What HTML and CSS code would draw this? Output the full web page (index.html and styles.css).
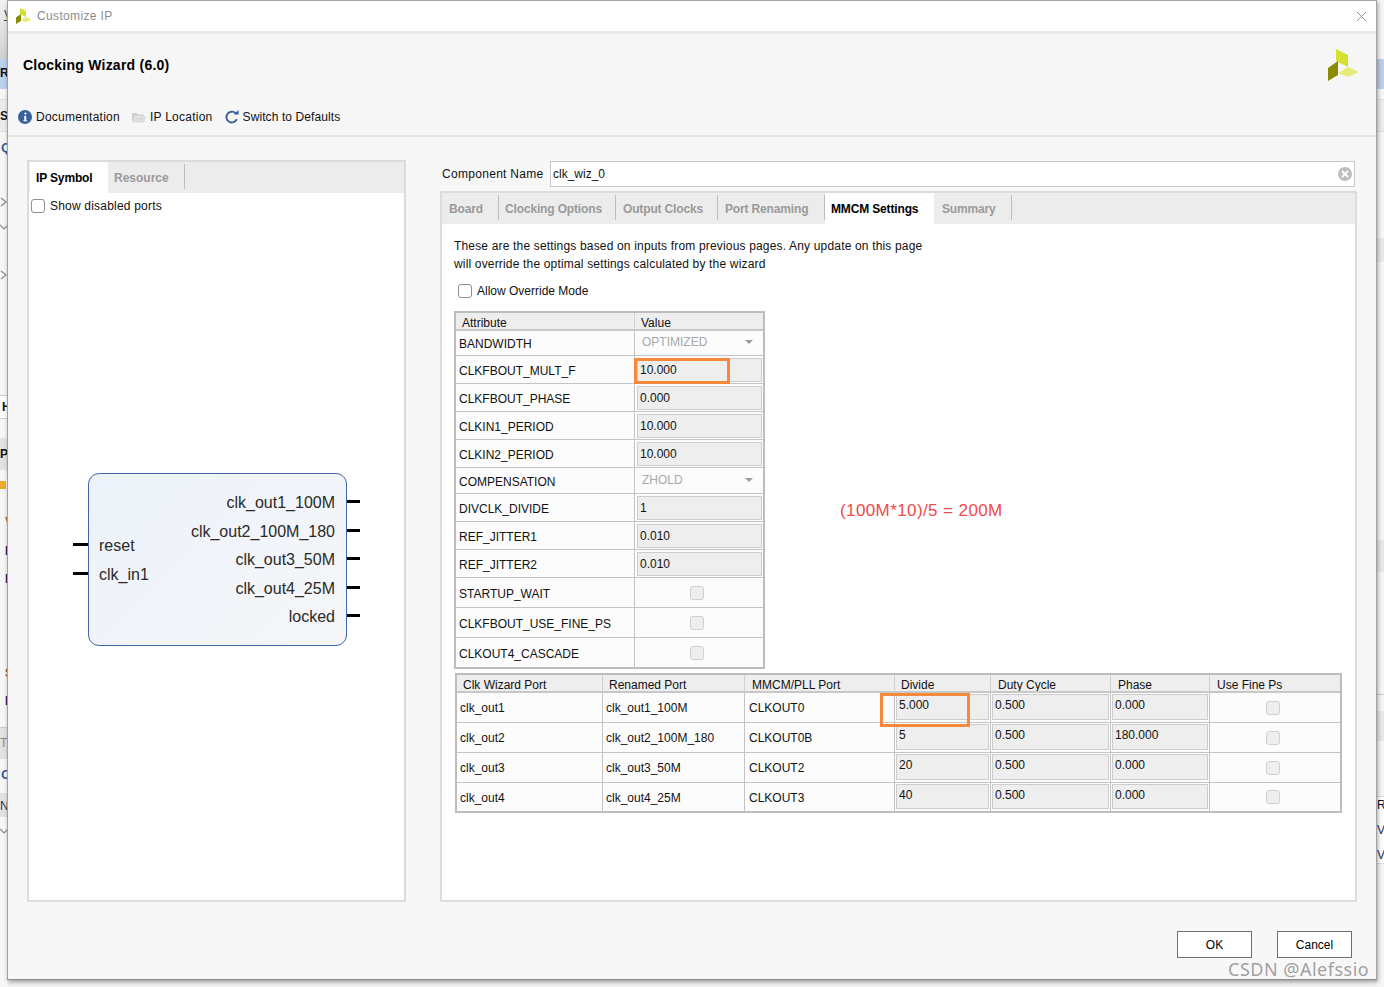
FILE: index.html
```html
<!DOCTYPE html>
<html lang="en">
<head>
<meta charset="utf-8">
<title>Customize IP</title>
<link rel="stylesheet" href="styles.css">
</head>
<body>
<div class="screen">
  <div class="bg-strip bg-left">
    <span class="bg-band bg-top"></span>
    <span class="bg-band bg-blue"></span>
    <span class="bg-band bg-grey1"></span>
    <span class="bg-band bg-grey2"></span>
    <span class="bg-band bg-grey3"></span>
    <span class="bg-band bg-grey4"></span>
    <span class="bg-band bg-grey5"></span>
    <span class="bg-t t-v">V</span><span class="bg-t t-r">R</span><span class="bg-t t-s">S</span><span class="bg-t t-q">Q</span>
    <svg class="chev c1" viewBox="0 0 8 10"><path d="M1 1l5 4-5 4"/></svg>
    <svg class="chev c2" viewBox="0 0 8 10"><path d="M0 3l4 4 4-4"/></svg>
    <svg class="chev c3" viewBox="0 0 8 10"><path d="M1 1l5 4-5 4"/></svg>
    <svg class="chev c4" viewBox="0 0 8 10"><path d="M0 3l4 4 4-4"/></svg>
    <span class="bg-t t-h">H</span><span class="bg-t t-p">P</span>
    <span class="bg-orange"></span>
    <span class="bg-t t-link t-v2">V</span><span class="bg-t t-link t-i">I</span><span class="bg-t t-link t-d">D</span>
    <span class="bg-t t-link t-s2">S</span><span class="bg-t t-link t-l">L</span>
    <span class="bg-t t-to">T</span><span class="bg-t t-q2">C</span><span class="bg-t t-n">N</span>
  </div>
  <div class="bg-strip bg-right">
    <span class="bg-band rb-blue"></span>
    <span class="bg-band rb-1"></span>
    <span class="bg-band rb-2"></span>
    <span class="bg-band rb-3"></span>
    <span class="bg-band rb-4"></span>
    <span class="bg-band rb-5"></span>
    <span class="bg-t rt-r">R</span><span class="bg-t rt-v1">Vi</span><span class="bg-t rt-v2">Vi</span>
  </div>

  <div class="dialog">
    <header class="titlebar">
      <svg class="logo-small" viewBox="0 0 32 32"><polygon class="lg-a" points="8,0 20,6 20,18 8,12"/><polygon class="lg-b" points="10,12 10,26 0,32 0,19"/><polygon class="lg-c" points="10,24 20,18 31,23 20,28"/></svg>
      <span class="title-text">Customize IP</span>
      <svg class="close" viewBox="0 0 12 12"><path d="M1 1 11 11M11 1 1 11"/></svg>
    </header>

    <section class="head">
      <div class="head-top">
        <h1>Clocking Wizard (6.0)</h1>
        <svg class="logo-big" viewBox="0 0 32 32"><polygon class="lg-a" points="8,0 20,6 20,18 8,12"/><polygon class="lg-b" points="10,12 10,26 0,32 0,19"/><polygon class="lg-c" points="10,24 20,18 31,23 20,28"/></svg>
      </div>
      <div class="toolbar">
        <span class="tool tool-doc">
          <svg class="ico" viewBox="0 0 14 14"><circle cx="7" cy="7" r="7" fill="#37609c"/><circle cx="7.4" cy="3.6" r="1.1" fill="#fff"/><path d="M6 6h2.2v4.2h.9v1H5.4v-1h.9V7H6z" fill="#fff"/></svg>
          Documentation
        </span>
        <span class="tool tool-loc">
          <svg class="ico" viewBox="0 0 14 14"><path d="M0 3h5l1 1.4h6V6H3L1 12H0z" fill="#cfcfcf"/><path d="M3.4 6.6H14L12 12.6H1.2z" fill="#dcdcdc"/></svg>
          IP Location
        </span>
        <span class="tool tool-def">
          <svg class="ico" viewBox="0 0 14 14"><path d="M11.8 9.2A5.4 5.4 0 1 1 10.6 3.2" fill="none" stroke="#37609c" stroke-width="1.9"/><path d="M8.6 4.6h5V0z" fill="#37609c"/></svg>
          Switch to Defaults
        </span>
      </div>
    </section>

    <main class="content">
      <div class="panel-left">
        <div class="tabs tabs-left">
          <span class="tab active tab-sym">IP Symbol</span>
          <span class="tab tab-res">Resource</span>
        </div>
        <div class="left-body">
          <label class="check-row disabled-ports"><span class="cb"></span>Show disabled ports</label>
          <div class="symbol">
            <div class="sym-col sym-in">
              <div class="pin">reset<i class="port port-l"></i></div>
              <div class="pin">clk_in1<i class="port port-l"></i></div>
            </div>
            <div class="sym-col sym-out">
              <div class="pin">clk_out1_100M<i class="port port-r"></i></div>
              <div class="pin">clk_out2_100M_180<i class="port port-r"></i></div>
              <div class="pin">clk_out3_50M<i class="port port-r"></i></div>
              <div class="pin">clk_out4_25M<i class="port port-r"></i></div>
              <div class="pin">locked<i class="port port-r"></i></div>
            </div>
          </div>
        </div>
      </div>

      <div class="panel-right">
        <div class="comp-row">
          <span class="comp-label">Component Name</span>
          <div class="comp-input">
            <span>clk_wiz_0</span>
            <svg class="clear" viewBox="0 0 14 14"><circle cx="7" cy="7" r="7" fill="#bdbdbd"/><path d="M4 4l6 6M10 4l-6 6" stroke="#fff" stroke-width="1.8"/></svg>
          </div>
        </div>
        <div class="tab-panel">
          <div class="tabs tabs-right">
            <span class="tab rt-board">Board</span>
            <span class="tab rt-clock">Clocking Options</span>
            <span class="tab rt-out">Output Clocks</span>
            <span class="tab rt-port">Port Renaming</span>
            <span class="tab active rt-mmcm">MMCM Settings</span>
            <span class="tab rt-sum">Summary</span>
          </div>
          <div class="right-body">
            <p class="intro">These are the settings based on inputs from previous pages. Any update on this page<br>will override the optimal settings calculated by the wizard</p>
            <label class="check-row override"><span class="cb"></span>Allow Override Mode</label>

            <div class="attr">
              <div class="th">Attribute</div><div class="th">Value</div>
              <div class="td">BANDWIDTH</div><div class="td sel"><span>OPTIMIZED</span><i class="caret"></i></div>
              <div class="td">CLKFBOUT_MULT_F</div><div class="td in"><span class="field">10.000</span><i class="mark mark-a"></i></div>
              <div class="td">CLKFBOUT_PHASE</div><div class="td in"><span class="field">0.000</span></div>
              <div class="td">CLKIN1_PERIOD</div><div class="td in"><span class="field">10.000</span></div>
              <div class="td">CLKIN2_PERIOD</div><div class="td in"><span class="field">10.000</span></div>
              <div class="td">COMPENSATION</div><div class="td sel"><span>ZHOLD</span><i class="caret"></i></div>
              <div class="td">DIVCLK_DIVIDE</div><div class="td in"><span class="field">1</span></div>
              <div class="td">REF_JITTER1</div><div class="td in"><span class="field">0.010</span></div>
              <div class="td">REF_JITTER2</div><div class="td in"><span class="field">0.010</span></div>
              <div class="td">STARTUP_WAIT</div><div class="td ctr"><span class="cb off"></span></div>
              <div class="td">CLKFBOUT_USE_FINE_PS</div><div class="td ctr"><span class="cb off"></span></div>
              <div class="td">CLKOUT4_CASCADE</div><div class="td ctr"><span class="cb off"></span></div>
            </div>

            <div class="ports">
              <div class="th">Clk Wizard Port</div><div class="th">Renamed Port</div><div class="th">MMCM/PLL Port</div><div class="th">Divide</div><div class="th">Duty Cycle</div><div class="th">Phase</div><div class="th">Use Fine Ps</div>

              <div class="td">clk_out1</div><div class="td">clk_out1_100M</div><div class="td">CLKOUT0</div>
              <div class="td in"><span class="field">5.000</span><i class="mark mark-b"></i></div><div class="td in"><span class="field">0.500</span></div><div class="td in"><span class="field">0.000</span></div><div class="td ctr"><span class="cb off"></span></div>

              <div class="td">clk_out2</div><div class="td">clk_out2_100M_180</div><div class="td">CLKOUT0B</div>
              <div class="td in"><span class="field">5</span></div><div class="td in"><span class="field">0.500</span></div><div class="td in"><span class="field">180.000</span></div><div class="td ctr"><span class="cb off"></span></div>

              <div class="td">clk_out3</div><div class="td">clk_out3_50M</div><div class="td">CLKOUT2</div>
              <div class="td in"><span class="field">20</span></div><div class="td in"><span class="field">0.500</span></div><div class="td in"><span class="field">0.000</span></div><div class="td ctr"><span class="cb off"></span></div>

              <div class="td">clk_out4</div><div class="td">clk_out4_25M</div><div class="td">CLKOUT3</div>
              <div class="td in"><span class="field">40</span></div><div class="td in"><span class="field">0.500</span></div><div class="td in"><span class="field">0.000</span></div><div class="td ctr"><span class="cb off"></span></div>
            </div>

            <div class="note">(100M*10)/5 = 200M</div>
          </div>
        </div>
      </div>
    </main>

    <footer class="actions">
      <button class="btn">OK</button>
      <button class="btn">Cancel</button>
    </footer>
  </div>
  <div class="watermark">CSDN @Alefssio</div>
</div>
</body>
</html>
```

FILE: styles.css
```css
* { box-sizing: border-box; }
html, body { margin: 0; padding: 0; }
body {
  font-family: "Liberation Sans", Arial, sans-serif;
  font-size: 12px;
  color: #111;
  background: #f0f0f0;
}
.screen { position: relative; width: 1384px; height: 987px; overflow: hidden; background: #f1f1f1; }

/* application behind the dialog */
.bg-strip { position: absolute; top: 0; bottom: 0; overflow: hidden; }
.bg-left { left: 0; width: 8px; background: #f6f6f6; }
.bg-right { left: 1377px; width: 7px; background: #f6f6f6; }
.bg-band { position: absolute; left: 0; right: 0; display: block; }
.bg-top { top: 0; height: 59px; background: linear-gradient(#f2f2f2, #d0d0d0); }
.bg-blue { top: 59px; height: 30px; background: #bcd0ee; }
.bg-grey1 { top: 99px; height: 33px; background: #ececec; border-top: 1px solid #ddd; border-bottom: 1px solid #ddd; }
.bg-grey2 { top: 395px; height: 24px; background: #fff; border-top: 1px solid #ccc; border-bottom: 1px solid #ccc; }
.bg-grey3 { top: 438px; height: 32px; background: #e2e2e2; }
.bg-grey4 { top: 727px; height: 32px; background: #e2e2e2; border-top: 1px solid #ccc; }
.bg-grey5 { top: 793px; height: 24px; background: #e2e2e2; }
.bg-t { position: absolute; left: 0; font-size: 12px; line-height: 14px; font-weight: bold; color: #111; }
.t-v { top: 8px; left: 4px; color: #444; font-weight: normal; text-decoration: underline; }
.t-r { top: 66px; }
.t-s { top: 109px; }
.t-q { top: 141px; left: 1px; color: #37609c; font-size: 13px; }
.chev { position: absolute; left: 0; width: 8px; height: 10px; }
.chev path { fill: none; stroke: #8a8a8a; stroke-width: 1.2; }
.c1 { top: 197px; }
.c2 { top: 222px; }
.c3 { top: 270px; }
.c4 { top: 826px; }
.t-h { top: 400px; left: 2px; }
.t-p { top: 447px; }
.bg-orange { position: absolute; left: 0; top: 481px; width: 6px; height: 8px; background: #f0a92c; }
.t-link { left: 5px; color: #2a1c66; }
.t-v2 { top: 515px; color: #b07a20; }
.t-i { top: 544px; }
.t-d { top: 572px; }
.t-s2 { top: 666px; color: #b0502a; }
.t-l { top: 694px; }
.t-to { top: 736px; color: #888; font-weight: normal; }
.t-q2 { top: 768px; left: 1px; color: #37609c; font-size: 13px; }
.t-n { top: 799px; font-weight: normal; color: #1c2f5c; }
.rb-blue { top: 59px; height: 30px; background: #bcd0ee; }
.rb-1 { top: 99px; height: 33px; background: #ececec; border-top: 1px solid #ddd; border-bottom: 1px solid #ddd; }
.rb-2 { top: 238px; height: 24px; background: #e8e8e8; }
.rb-3 { top: 540px; height: 32px; background: #e8e8e8; }
.rb-4 { top: 694px; height: 47px; background: linear-gradient(#f6f6f6 16px, #e8e8e8 16px); border-top: 1px solid #ccc; }
.rb-5 { top: 796px; height: 68px; background: #fff; border-top: 1px solid #ddd; border-bottom: 1px solid #ddd; }
.rt-r { top: 798px; left: 0; font-weight: normal; }
.rt-v1 { top: 823px; left: 0; font-weight: normal; color: #1c2f5c; }
.rt-v2 { top: 848px; left: 0; font-weight: normal; color: #1c2f5c; }

/* dialog window */
.dialog {
  position: absolute;
  left: 7px;
  top: 0;
  width: 1370px;
  height: 980px;
  display: flex;
  flex-direction: column;
  background: #f7f7f7;
  border: 1px solid #a2a2a2;
  border-bottom-color: #8b8b8b;
  box-shadow: 1px 2px 4px rgba(0, 0, 0, .35);
}
.titlebar {
  height: 33px;
  flex: none;
  display: flex;
  align-items: center;
  padding: 0 8px 0 8px;
  background: #fff;
  border-bottom: 3px solid #e8e8e8;
}
.logo-small { width: 16px; height: 16px; margin-right: 5px; }
.logo-big { width: 32px; height: 32px; }
.lg-a { fill: #d6e030; }
.lg-b { fill: #8a8c00; }
.lg-c { fill: #e6ea78; }
.title-text { font-size: 12px; letter-spacing: .35px; color: #8c8c8c; }
.close { width: 11px; height: 11px; margin-left: auto; margin-right: 1px; }
.close path { stroke: #8c8c8c; stroke-width: 1; fill: none; }

.head {
  height: 103px;
  flex: none;
  background: #f6f6f6;
  border-bottom: 2px solid #e6e6e6;
  display: flex;
  flex-direction: column;
}
.head-top {
  display: flex;
  justify-content: space-between;
  padding: 15px 16px 0 15px;
  height: 73px;
}
.head-top h1 { margin: 8px 0 0; font-size: 14px; line-height: 16px; font-weight: bold; color: #000; letter-spacing: .24px; }
.toolbar { display: flex; align-items: center; height: 20px; padding-left: 10px; }
.tool { display: flex; align-items: center; color: #111; letter-spacing: .25px; }
.ico { width: 14px; height: 14px; margin-right: 4px; }
.tool-loc { margin-left: 12px; }
.tool-def { margin-left: 12px; letter-spacing: .1px; }

.content {
  flex: none;
  height: 765px;
  display: flex;
  padding: 23px 19px 0 19px;
}
.panel-left {
  width: 379px;
  height: 742px;
  flex: none;
  border: 2px solid #dcdcdc;
  display: flex;
  flex-direction: column;
  background: #fff;
}
.tabs { display: flex; flex: none; background: #ececec; }
.tabs-left { height: 31px; padding-left: 1px; }
.tab { display: flex; align-items: center; font-weight: bold; color: #9a9a9a; letter-spacing: -.15px; }
.tab.active { background: #fff; color: #000; }
.tab-sym { width: 78px; padding-left: 6px; }
.tab-res { padding-left: 6px; width: 77px; position: relative; letter-spacing: 0; }
.tab-res::after, .tabs-right .tab::after {
  content: "";
  position: absolute;
  right: 0;
  top: 2px;
  height: 25px;
  width: 1px;
  background: #bdbdbd;
}
.left-body { position: relative; flex: 1; background: #fff; padding: 5px 0 0 2px; }
.check-row { display: flex; align-items: center; gap: 5px; height: 15px; }
.disabled-ports { letter-spacing: .2px; }
.cb {
  display: block;
  width: 14px;
  height: 14px;
  flex: none;
  background: #fff;
  border: 1px solid #8f8f8f;
  border-radius: 3px;
}
.cb.off { background: #eeeeee; border-color: #cfcfcf; }

.symbol {
  position: absolute;
  left: 59px;
  top: 280px;
  width: 259px;
  height: 173px;
  display: flex;
  justify-content: space-between;
  border: 1px solid #3f66a8;
  border-radius: 11px;
  background: linear-gradient(135deg, #edf3fb, #f5f6f8);
  font-size: 16px;
  color: #2a2a2a;
}
.sym-col { display: flex; flex-direction: column; }
.sym-in { padding: 57px 0 0 10px; }
.sym-out { padding: 14px 11px 0 0; align-items: flex-end; }
.pin { position: relative; height: 28.6px; line-height: 30px; white-space: nowrap; }
.port { position: absolute; top: 12px; height: 3px; background: #000; display: block; }
.port-l { left: -26px; width: 15px; }
.port-r { right: -25px; width: 13px; }

.panel-right { width: 917px; margin-left: 34px; flex: none; display: flex; flex-direction: column; }
.comp-row { display: flex; align-items: center; height: 26px; margin: 1px 0 4px 2px; }
.comp-label { width: 108px; flex: none; color: #111; letter-spacing: .3px; }
.comp-input {
  width: 805px;
  height: 26px;
  display: flex;
  align-items: center;
  justify-content: space-between;
  padding: 0 2px 0 2px;
  background: #fff;
  border: 1px solid #c8c8c8;
}
.clear { width: 14px; height: 14px; }
.tab-panel {
  width: 917px;
  height: 711px;
  border: 2px solid #dcdcdc;
  display: flex;
  flex-direction: column;
  background: #fff;
}
.tabs-right { height: 31px; }
.tabs-right .tab { position: relative; padding-top: 1px; }
.rt-board { width: 57px; padding-left: 7px; }
.rt-clock { width: 117px; padding-left: 6px; }
.rt-out { width: 102px; padding-left: 7px; }
.rt-port { width: 107px; padding-left: 7px; }
.rt-mmcm { width: 109px; padding-left: 6px; }
.rt-mmcm::after { display: none; }
.rt-sum { width: 78px; padding-left: 8px; }

.right-body { position: relative; flex: 1; padding: 13px 0 0 12px; background: #fff; }
.intro { margin: 0; line-height: 18px; color: #111; letter-spacing: .17px; }
.override { margin: 10px 0 0 4px; }

.th {
  background: #eeeeee;
  border-right: 1px solid #d0d0d0;
  border-bottom: 2px solid #c8c8c8;
  padding: 4px 0 0 6px;
  line-height: 12px;
  overflow: hidden;
  white-space: nowrap;
}
.td {
  position: relative;
  display: flex;
  align-items: center;
  padding-left: 3px;
  background: #fcfcfc;
  border-right: 1px solid #c4c4c4;
  border-bottom: 1px solid #c4c4c4;
  white-space: nowrap;
}
.attr {
  display: grid;
  width: 311px;
  margin-top: 13px;
  border: 2px solid #bdbdbd;
  grid-template-columns: 179px 128px;
  grid-template-rows: 18px 25px 28px 28px 28px 28px 26px 28px 28px 28px 30px 30px 29px;
}
.attr > :nth-child(2n) { border-right: 0; }
.attr > :nth-last-child(-n+2) { border-bottom: 0; }
.attr > .td:nth-child(2n+1) { padding-top: 2px; }
.ports {
  display: grid;
  width: 887px;
  margin-top: 4px;
  margin-left: 1px;
  border: 2px solid #bdbdbd;
  grid-template-columns: 146px 142px 150px 96px 120px 99px 130px;
  grid-template-rows: 18px 30px 30px 30px 28px;
}
.ports > :nth-child(7n) { border-right: 0; }
.ports > :nth-last-child(-n+7) { border-bottom: 0; }
.ports > :nth-last-child(n+5):nth-last-child(-n+7) { padding-top: 2px; }
.ports > .td:nth-child(7n+3) { padding-left: 4px; }
.ports > .th:nth-child(3), .ports > .th:nth-child(5), .ports > .th:nth-child(6), .ports > .th:nth-child(7) { padding-left: 7px; }
.td.in { padding: 1px 1px 2px 1px; }
.field {
  display: block;
  width: 100%;
  height: 100%;
  padding: 4px 0 0 2px;
  line-height: 13px;
  background: #eeeeee;
  border: 1px solid #cdcdcd;
}
.attr .td.in { padding: 2px 1px 1px 2px; }
.attr .field { padding-top: 5px; }
.td.sel { justify-content: space-between; padding: 0 10px 2px 7px; color: #a8a8a8; }
.caret {
  display: block;
  width: 0;
  height: 0;
  border: 4px solid transparent;
  border-top-color: #9c9c9c;
  border-bottom-width: 0;
}
.td.ctr { justify-content: center; padding: 0 5px 0 0; }
.mark { position: absolute; z-index: 2; display: block; border: 3px solid #f58a3c; }
.mark-a { left: -1px; top: 2px; width: 96px; height: 26px; }
.mark-b { left: -15px; top: 0; width: 90px; height: 34px; }

.note {
  position: absolute;
  left: 398px;
  top: 277px;
  font-size: 17px;
  line-height: 20px;
  letter-spacing: .4px;
  color: #f04a4a;
}

.actions {
  flex: 1;
  display: flex;
  justify-content: flex-end;
  gap: 25px;
  padding: 29px 24px 0 0;
}
.btn {
  width: 75px;
  height: 27px;
  padding: 0;
  font: inherit;
  color: #000;
  background: #fff;
  border: 1px solid #6f6f6f;
  border-radius: 0;
}
.watermark {
  position: absolute;
  left: 1228px;
  top: 957px;
  font-size: 18px;
  line-height: 24px;
  letter-spacing: .5px;
  color: rgba(130, 130, 130, .75);
  font-family: "Noto Sans", "Liberation Sans", sans-serif;
  white-space: nowrap;
}
```
